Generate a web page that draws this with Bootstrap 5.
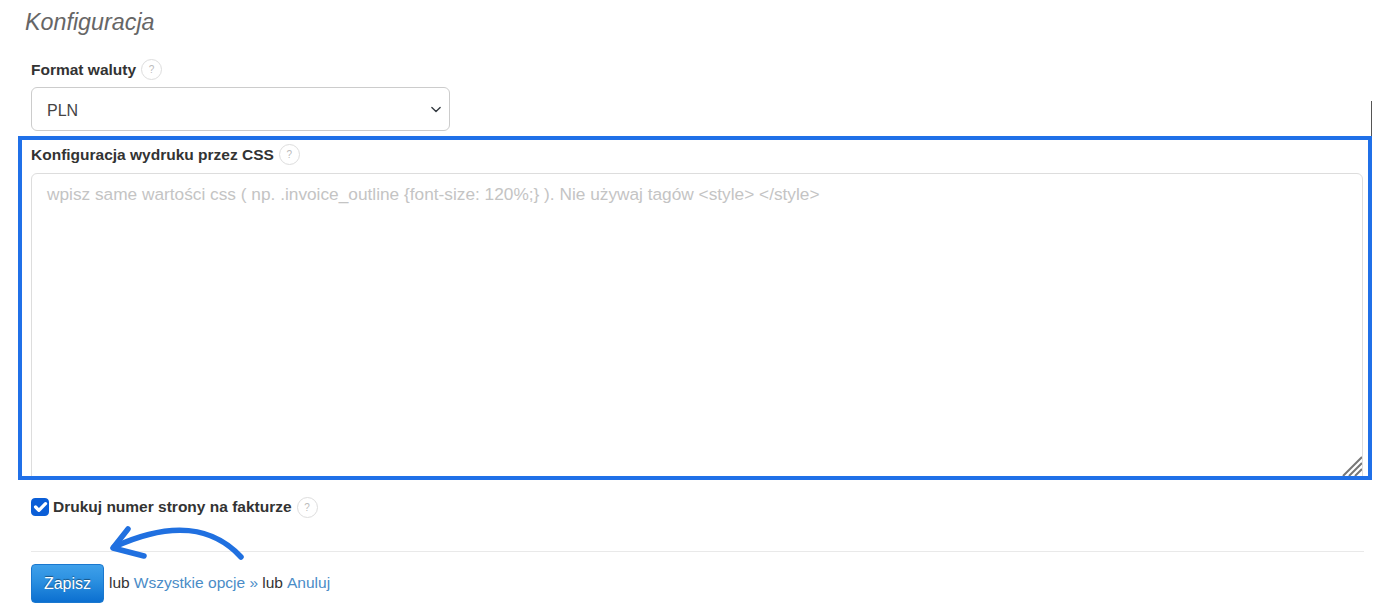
<!DOCTYPE html>
<html lang="pl">
<head>
  <meta charset="UTF-8">
  <meta name="viewport" content="width=device-width, initial-scale=1">
  <title>Konfiguracja</title>
  <link href="https://cdn.jsdelivr.net/npm/bootstrap@5.3.0/dist/css/bootstrap.min.css" rel="stylesheet">
  <style>
    body { font-family: "Liberation Sans", Arial, sans-serif; font-size: 15.55px; color: #333; background: #fff; overflow: hidden; }
    .page-wrap { position: relative; height: 614px; padding: 0 17px 0 31px; }
    .page-title { font-size: 23.3px; font-style: italic; font-weight: 400; color: #666; line-height: 24px; margin: 0 0 0 -6px; padding-top: 10px; height: 59px; }
    .field-label { font-weight: 700; font-size: 15.5px; color: #333; line-height: 20px; }
    .help-dot { width: 21px; height: 21px; border: 1px solid #ddd; border-radius: 50%; color: #bbb; font-size: 10px; line-height: 19px; text-align: center; margin-left: 5px; background: #fff; }
    .currency-select { width: 419px; height: 44px; margin-top: 7px; padding-top: 9px; padding-bottom: 5px; font-size: 16px; color: #444; padding-left: 15px; border-color: #ccc; border-radius: 6px; font-family: inherit; background-position: right 6px center; background-size: 14px 11px; }
    .css-frame { border: 4px solid #2070e8; margin: 5px 0 0 -13px; width: 1354px; height: 344px; padding: 4px 5px 0 9px; overflow: hidden; position: relative; }
    .css-input { display: block; width: 100%; height: 320px; margin-top: 8px; resize: none; font-size: 17.27px; line-height: 24px; padding: 8px 15px; border-color: #ddd; border-radius: 6px; font-family: inherit; }
    .css-input::placeholder { color: #c4c4c4; opacity: 1; }
    .grip { position: absolute; right: 6px; bottom: 0; }
    .edge-line { position: absolute; left: 1371px; top: 101px; width: 1px; height: 37px; background: #555; }
    .print-row { margin-top: 16px; height: 22px; }
    .print-check { width: 18px; height: 18px; margin: 0 4px 0 0; border-radius: 4px; }
    .form-check-input:checked { background-color: #0b5ed7; border-color: #0b5ed7; background-size: 22px; }
    .divider { border-top: 1px solid #e9e9e9; margin-top: 33px; }
    .action-row { margin-top: 12px; color: #333; }
    .action-links { margin-top: -2px; }
    .save-btn { width: 73px; height: 39px; padding: 0; color: #fff; font-size: 16px; background: linear-gradient(#3fa0ea 0, #2a8fe0 45%, #0b6fd0 100%); border: 1px solid #1a78cf; border-radius: 4px; text-shadow: 0 -1px 1px rgba(0,0,0,.45); margin-right: 1px; }
    .action-links a { color: #4a8cc7; text-decoration: none; }
    .action-links span, .action-links a { margin-left: 4px; }
    .arrow-mark { position: absolute; left: 108px; top: 522px; }
  </style>
</head>
<body>
  <div class="page-wrap">
    <h1 class="page-title">Konfiguracja</h1>

    <div class="d-flex align-items-center">
      <label class="field-label" for="waluta">Format waluty</label>
      <div class="help-dot">?</div>
    </div>
    <select id="waluta" class="form-select currency-select">
      <option>PLN</option>
    </select>

    <div class="edge-line"></div>

    <div class="css-frame">
      <div class="d-flex align-items-center">
        <label class="field-label" for="cssPrint">Konfiguracja wydruku przez CSS</label>
        <div class="help-dot">?</div>
      </div>
      <textarea id="cssPrint" class="form-control css-input" placeholder="wpisz same wartości css ( np. .invoice_outline {font-size: 120%;} ). Nie używaj tagów <style> </style>"></textarea>
      <svg class="grip" width="20" height="20" viewBox="0 0 20 20">
        <path d="M1 20 20 1M7 20 20 7M13 20 20 13" stroke="#777" stroke-width="2" fill="none"/>
      </svg>
    </div>

    <div class="d-flex align-items-center print-row">
      <input class="form-check-input print-check" type="checkbox" id="pageNum" checked>
      <label class="field-label" for="pageNum">Drukuj numer strony na fakturze</label>
      <div class="help-dot">?</div>
    </div>

    <div class="divider"></div>

    <div class="d-flex align-items-center action-row">
      <button type="button" class="btn save-btn">Zapisz</button>
      <div class="action-links"><span>lub</span><a href="#">Wszystkie opcje »</a><span>lub</span><a href="#">Anuluj</a></div>
    </div>

    <svg class="arrow-mark" width="140" height="40" viewBox="0 0 140 40">
      <path d="M133 35C105 5 65 -2 6 25" stroke="#2070e0" stroke-width="5.5" fill="none" stroke-linecap="round"/>
      <path d="M20 7 5 26 36 34" stroke="#2070e0" stroke-width="5.5" fill="none" stroke-linecap="round" stroke-linejoin="round"/>
    </svg>
  </div>
  <script src="https://cdn.jsdelivr.net/npm/bootstrap@5.3.0/dist/js/bootstrap.bundle.min.js"></script>
</body>
</html>
